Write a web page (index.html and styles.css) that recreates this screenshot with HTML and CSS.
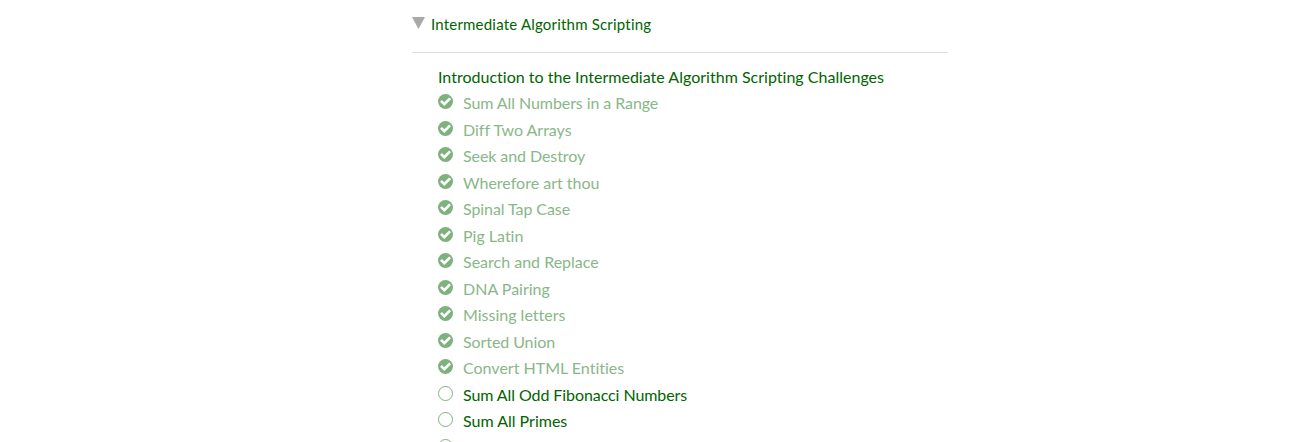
FILE: index.html
```html
<!DOCTYPE html>
<html lang="en">
<head>
<meta charset="utf-8">
<title>Intermediate Algorithm Scripting</title>
<link rel="stylesheet" href="styles.css">
</head>
<body>
<svg class="sprite" aria-hidden="true">
  <symbol id="done" viewBox="0 0 15 15"><circle cx="7.5" cy="7.5" r="7.5" fill="currentColor"/><path d="M3 6.9 6.3 10.2 12.1 4.4" fill="none" stroke="#fff" stroke-width="2.7"/></symbol>
  <symbol id="todo" viewBox="0 0 15 15"><circle cx="7.5" cy="7.5" r="7" fill="none" stroke="currentColor"/></symbol>
</svg>
<main class="map">
  <h2 class="block-title"><svg class="caret" viewBox="0 0 12 12" preserveAspectRatio="none"><path d="M0 0H12L6 12Z"/></svg>Intermediate Algorithm Scripting</h2>
  <ul class="challenges">
    <li class="intro">Introduction to the Intermediate Algorithm Scripting Challenges</li>
    <li class="completed tight"><svg class="icon"><use href="#done"/></svg>Sum All Numbers in a Range</li>
    <li class="completed"><svg class="icon"><use href="#done"/></svg>Diff Two Arrays</li>
    <li class="completed tight"><svg class="icon"><use href="#done"/></svg>Seek and Destroy</li>
    <li class="completed"><svg class="icon"><use href="#done"/></svg>Wherefore art thou</li>
    <li class="completed tight"><svg class="icon"><use href="#done"/></svg>Spinal Tap Case</li>
    <li class="completed"><svg class="icon"><use href="#done"/></svg>Pig Latin</li>
    <li class="completed"><svg class="icon"><use href="#done"/></svg>Search and Replace</li>
    <li class="completed"><svg class="icon"><use href="#done"/></svg>DNA Pairing</li>
    <li class="completed"><svg class="icon"><use href="#done"/></svg>Missing letters</li>
    <li class="completed tight"><svg class="icon"><use href="#done"/></svg>Sorted Union</li>
    <li class="completed"><svg class="icon"><use href="#done"/></svg>Convert HTML Entities</li>
    <li class="tight"><svg class="icon"><use href="#todo"/></svg>Sum All Odd Fibonacci Numbers</li>
    <li><svg class="icon"><use href="#todo"/></svg>Sum All Primes</li>
    <li><svg class="icon"><use href="#todo"/></svg></li>
  </ul>
</main>
</body>
</html>
```
FILE: styles.css
```css
* { box-sizing: border-box; }
body {
  margin: 0;
  height: 442px;
  overflow: hidden;
  background: #fff;
  color: #006400;
  font-family: Lato, sans-serif;
  font-size: 16px;
  font-variant-ligatures: none;
}
.sprite { display: none; }
.map { width: 536px; margin-left: 412px; }
.block-title {
  display: flex;
  align-items: center;
  height: 53px;
  margin: 0;
  padding-bottom: 4px;
  border-bottom: 1px solid #ddd;
  font-size: 15px;
  font-weight: 400;
  letter-spacing: 0.2px;
}
.caret { width: 13px; height: 12px; margin: -2px 6px 0 0; fill: #a9a9a9; }
.challenges { margin: 0; padding: 10px 0 0 26px; list-style: none; }
.challenges li { display: flex; align-items: center; height: 26.5px; }
.challenges .intro { letter-spacing: 0.015px; }
.challenges .tight { letter-spacing: -0.08px; }
.challenges .completed { color: #88b788; }
.icon { width: 15px; height: 15px; margin: -2px 10px 0 0; flex: none; color: #7fb17f; }
```
